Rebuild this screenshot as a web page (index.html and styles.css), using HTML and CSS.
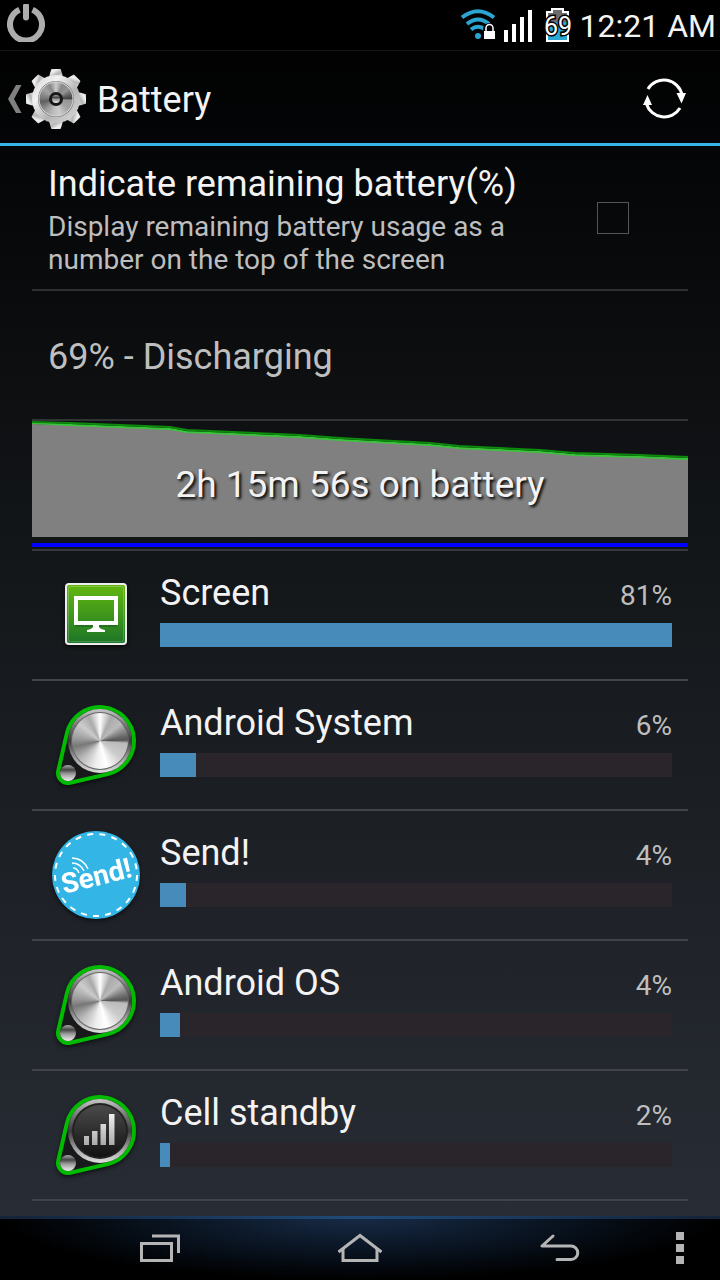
FILE: index.html
```html
<!DOCTYPE html>
<html lang="en">
<head>
    <meta charset="UTF-8">
    <meta name="viewport" content="width=device-width, initial-scale=1">
    <title>Battery</title>
    <link rel="stylesheet" href="styles.css">
</head>
<body>
<!-- shared gradients and shapes -->
<svg class="defs" width="0" height="0" aria-hidden="true">
    <defs>
        <linearGradient id="gear-fill" x1="0" y1="0" x2="1" y2="1">
            <stop offset="0" stop-color="#cfcfcf"/>
            <stop offset=".3" stop-color="#f2f2f2"/>
            <stop offset=".6" stop-color="#b5b5b5"/>
            <stop offset="1" stop-color="#dedede"/>
        </linearGradient>
        <linearGradient id="ring-fill" x1="0" y1="0" x2="0" y2="1">
            <stop offset="0" stop-color="#c8c8c8"/>
            <stop offset=".25" stop-color="#777"/>
            <stop offset=".5" stop-color="#3a3a3a"/>
            <stop offset=".75" stop-color="#999"/>
            <stop offset="1" stop-color="#e0e0e0"/>
        </linearGradient>
        <linearGradient id="dark-fill" x1="0" y1="0" x2="0" y2="1">
            <stop offset="0" stop-color="#4a4a4a"/>
            <stop offset="1" stop-color="#121212"/>
        </linearGradient>
        <linearGradient id="ball-fill" x1="0" y1="0" x2="0" y2="1">
            <stop offset="0" stop-color="#aaa"/>
            <stop offset=".3" stop-color="#444"/>
            <stop offset=".55" stop-color="#999"/>
            <stop offset="1" stop-color="#f0f0f0"/>
        </linearGradient>
        <linearGradient id="green-fill" x1="0" y1="0" x2="0" y2="1">
            <stop offset="0" stop-color="#63b80f"/>
            <stop offset="1" stop-color="#1d7527"/>
        </linearGradient>
        <linearGradient id="bars-fill" x1="0" y1="0" x2="0" y2="1">
            <stop offset="0" stop-color="#f0f0f0"/>
            <stop offset="1" stop-color="#aaa"/>
        </linearGradient>
        <path id="tooth" d="M25 10 L27 3 Q27 2 28 2 H36 Q37 2 37 3 L39 10 Z"/>
        <path id="belt" d="M59.65 77.15 A34 34 0 1 0 18.85 36.35 L10.25 73.75 A10 10 0 0 0 22.25 85.75 Z"/>
    </defs>
</svg>

<div class="screen">
    <!-- status bar -->
    <div class="status-bar">
        <svg class="power" width="38" height="38" viewBox="0 0 38 38" fill="none" stroke="#adadad">
            <path d="M12.5 5.8 A16 16 0 1 0 25.500 5.800" stroke-width="6"/>
            <path d="M19 2 V13.500" stroke-width="6" stroke-linecap="round"/>
        </svg>
        <div class="status-icons">
            <svg width="35" height="34" viewBox="0 0 35 34" fill="none">
                <g stroke="#2ba6d2" stroke-width="4">
                    <path d="M1 9.500 Q17 -3 33 9.500"/>
                    <path d="M6 16 Q17 7 28 16"/>
                    <path d="M10 21.500 Q17 16 24 21.500"/>
                </g>
                <circle cx="17" cy="28" r="3" fill="#2ba6d2"/>
                <path d="M22 32 V22 Q22 15 28.500 15 T35 22 V32 Z" fill="#000"/>
                <rect x="23" y="23" width="11" height="8" fill="#fff"/>
                <path d="M25 23 V20 a3.500 3.500 0 0 1 7 0 V23" stroke="#fff" stroke-width="1.500"/>
            </svg>
            <svg width="28" height="34" viewBox="0 0 28 34" fill="#fff">
                <rect x="0" y="22" width="4" height="12"/>
                <rect x="8" y="16" width="4" height="18"/>
                <rect x="16" y="9" width="4" height="25"/>
                <rect x="24" y="2" width="4" height="32"/>
            </svg>
            <svg class="charge" width="28" height="34" viewBox="0 0 28 34">
                <path d="M3 33 V4 H8 V1 H19 V4 H24 V33 Z" fill="#6c6c6c" stroke="#fff" stroke-width="2"/>
                <rect x="4" y="14" width="19" height="18" fill="#2ba6d2"/>
                <text x="14" y="27" text-anchor="middle">69</text>
            </svg>
            <span class="clock">12:21 AM</span>
        </div>
    </div>

    <!-- action bar -->
    <header class="action-bar">
        <a class="up" href="#" aria-label="Back to settings">
            <svg width="14" height="28" viewBox="0 0 14 28" fill="#808080">
                <path d="M0 14 L8 0 H13.500 L6 14 L13.500 28 H8 Z"/>
            </svg>
            <svg width="64" height="64" viewBox="0 0 64 64">
                <g fill="url(#gear-fill)">
                    <use href="#tooth"/>
                    <use href="#tooth" transform="rotate(45 32 32)"/>
                    <use href="#tooth" transform="rotate(90 32 32)"/>
                    <use href="#tooth" transform="rotate(135 32 32)"/>
                    <use href="#tooth" transform="rotate(180 32 32)"/>
                    <use href="#tooth" transform="rotate(225 32 32)"/>
                    <use href="#tooth" transform="rotate(270 32 32)"/>
                    <use href="#tooth" transform="rotate(315 32 32)"/>
                    <circle cx="32" cy="32" r="24"/>
                </g>
                <circle cx="32" cy="32" r="18" fill="#777"/>
                <foreignObject x="15" y="15" width="34" height="34"><div class="steel steel-dim"></div></foreignObject>
                <circle cx="32" cy="32" r="17" fill="none" stroke="#ddd"/>
                <circle cx="32" cy="32" r="7" fill="#171717"/>
                <circle cx="32" cy="32" r="4" fill="url(#ball-fill)"/>
            </svg>
        </a>
        <h1>Battery</h1>
        <button class="refresh" type="button" aria-label="Refresh">
            <svg width="48" height="48" viewBox="0 0 48 48" fill="none" stroke="#fff" stroke-width="3">
                <path d="M8 14 A18.500 18.500 0 0 1 42 20"/>
                <path d="M40 33 A18.500 18.500 0 0 1 6.500 29"/>
                <path d="M36.500 18 H46 L41.500 28.500 Z M3 30 H12 L7.500 20 Z" fill="#fff" stroke="none"/>
            </svg>
        </button>
    </header>

    <main class="content">
        <label class="pref" for="indicate">
            <span class="pref-text">
                <span class="title">Indicate remaining battery(%)</span>
                <span class="summary">Display remaining battery usage as a number on the top of the screen</span>
            </span>
            <input id="indicate" type="checkbox">
        </label>

        <p class="state">69% - Discharging</p>

        <!-- battery history -->
        <a class="history" href="#">
            <svg viewBox="0 0 656 128" preserveAspectRatio="none" aria-hidden="true">
                <path fill="#808080" d="M0 3 L38 4 L138 8 L155 11 L268 16 L308 19 L398 24 L427 27 L508 31 L543 34 L608 36 L656 38 V116 H0 Z"/>
                <path class="line-light" d="M0 2 L38 4 L138 8 L155 11 L268 16 L308 19 L398 24 L427 27 L508 31 L543 34 L608 36 L656 38"/>
                <path class="line-dark" d="M0 1 L38 2 L138 6 L155 9 L268 14 L308 17 L398 22 L427 25 L508 29 L543 32 L608 34 L656 36"/>
                <rect x="0" y="122" width="656" height="4" fill="#00f"/>
            </svg>
            <span class="history-text">2h 15m 56s on battery</span>
        </a>

        <!-- usage list -->
        <ul class="usage">
            <li>
                <a href="#">
                    <svg class="icon" width="96" height="96" viewBox="0 0 96 96">
                        <rect x="17" y="16" width="62" height="62" rx="4" fill="#eee"/>
                        <rect x="19" y="18" width="58" height="58" rx="2" fill="url(#green-fill)"/>
                        <rect x="20.500" y="19.500" width="55" height="55" rx="2" fill="none" stroke="#fff" stroke-opacity=".2"/>
                        <path d="M27 59 H69" stroke="#14501a" stroke-opacity=".4" stroke-width="2"/>
                        <rect x="28" y="31" width="40" height="25" fill="none" stroke="#fff" stroke-width="4"/>
                        <path d="M45 57 H51 V60 Q52 62 57 63 V65 H39 V63 Q44 62 45 60 Z" fill="#fff"/>
                    </svg>
                    <div class="usage-body">
                        <div class="usage-head"><span class="title">Screen</span><span class="percent">81%</span></div>
                        <div class="track"><div class="fill" style="width: 100%"></div></div>
                    </div>
                </a>
            </li>
            <li>
                <a href="#">
                    <svg class="icon" width="96" height="96" viewBox="0 0 96 96">
                        <use class="belt" href="#belt"/>
                        <circle cx="52" cy="44" r="32" fill="url(#ring-fill)"/>
                        <circle cx="52" cy="44" r="29" fill="#666"/>
                        <foreignObject x="24" y="16" width="56" height="56"><div class="steel"></div></foreignObject>
                        <circle cx="20" cy="76" r="8" fill="url(#ball-fill)"/>
                    </svg>
                    <div class="usage-body">
                        <div class="usage-head"><span class="title">Android System</span><span class="percent">6%</span></div>
                        <div class="track"><div class="fill" style="width: 7%"></div></div>
                    </div>
                </a>
            </li>
            <li>
                <a href="#">
                    <svg class="icon" width="96" height="96" viewBox="0 0 96 96">
                        <circle cx="48" cy="48" r="44" fill="#33b5e5"/>
                        <circle cx="48" cy="48" r="41" fill="none" stroke="#fff" stroke-width="2" stroke-dasharray="6 6.270"/>
                        <g fill="none" stroke="#fff" stroke-width="1.500">
                            <path d="M24 31 Q35 31 40 42"/>
                            <path d="M24 36 Q32 36 36 44"/>
                            <path d="M25 41 Q29 41 31 46"/>
                        </g>
                        <text class="send" x="16" y="67" transform="rotate(-14 16 67)">Send!</text>
                    </svg>
                    <div class="usage-body">
                        <div class="usage-head"><span class="title">Send!</span><span class="percent">4%</span></div>
                        <div class="track"><div class="fill" style="width: 5%"></div></div>
                    </div>
                </a>
            </li>
            <li>
                <a href="#">
                    <svg class="icon" width="96" height="96" viewBox="0 0 96 96">
                        <use class="belt" href="#belt"/>
                        <circle cx="52" cy="44" r="32" fill="url(#ring-fill)"/>
                        <circle cx="52" cy="44" r="29" fill="#666"/>
                        <foreignObject x="24" y="16" width="56" height="56"><div class="steel"></div></foreignObject>
                        <circle cx="20" cy="76" r="8" fill="url(#ball-fill)"/>
                    </svg>
                    <div class="usage-body">
                        <div class="usage-head"><span class="title">Android OS</span><span class="percent">4%</span></div>
                        <div class="track"><div class="fill" style="width: 4%"></div></div>
                    </div>
                </a>
            </li>
            <li>
                <a href="#">
                    <svg class="icon" width="96" height="96" viewBox="0 0 96 96">
                        <use class="belt" href="#belt"/>
                        <circle cx="52" cy="44" r="32" fill="url(#ring-fill)"/>
                        <circle cx="52" cy="44" r="28" fill="#222"/>
                        <circle cx="52" cy="44" r="26" fill="url(#dark-fill)"/>
                        <path fill="url(#bars-fill)" d="M36 58 V49 H41 V58 Z M44 58 V44 H49.500 V58 Z M52.500 58 V37 H58 V58 Z M61 58 V27 H66.500 V58 Z"/>
                        <circle cx="20" cy="76" r="8" fill="url(#ball-fill)"/>
                    </svg>
                    <div class="usage-body">
                        <div class="usage-head"><span class="title">Cell standby</span><span class="percent">2%</span></div>
                        <div class="track"><div class="fill" style="width: 2%"></div></div>
                    </div>
                </a>
            </li>
        </ul>
    </main>

    <!-- navigation bar -->
    <nav class="nav-bar">
        <button type="button" aria-label="Recent apps">
            <svg width="40" height="28" viewBox="0 0 40 28" fill="none" stroke="#b5b5b5" stroke-width="3">
                <rect x="1.500" y="9.500" width="30" height="17"/>
                <path d="M12 2 H38.500 V19"/>
            </svg>
        </button>
        <button type="button" aria-label="Home">
            <svg width="46" height="30" viewBox="0 0 46 30" fill="none" stroke="#b5b5b5" stroke-width="3">
                <path d="M1.500 19 L23 2.500 L44.500 19"/>
                <path d="M6 16 V27.500 H40 V16"/>
            </svg>
        </button>
        <button type="button" aria-label="Back">
            <svg width="40" height="28" viewBox="0 0 40 28" fill="none" stroke="#b5b5b5" stroke-width="3" stroke-linecap="round" stroke-linejoin="round">
                <path d="M13 2 L2 12 H31 a6.700 6.700 0 0 1 0 13.500 H17"/>
            </svg>
        </button>
        <button type="button" aria-label="Menu">
            <svg width="8" height="32" viewBox="0 0 8 32" fill="#b5b5b5">
                <rect width="8" height="8"/>
                <rect y="12" width="8" height="8"/>
                <rect y="24" width="8" height="8"/>
            </svg>
        </button>
    </nav>
</div>
</body>
</html>
```
FILE: styles.css
```css
*{
    box-sizing: border-box;
}
body{
    margin: 0;
    background: #000;
    color: #f3f3f3;
    font-family: Roboto, "Noto Sans", sans-serif;
}
svg{
    display: block;
    flex: none;
}
a{
    color: inherit;
    text-decoration: none;
}
button{
    display: flex;
    align-items: center;
    justify-content: center;
    padding: 0;
    border: 0;
    background: none;
}
.defs{
    position: absolute;
}
.screen{
    display: flex;
    flex-direction: column;
    min-height: 100vh;
    background: linear-gradient(#000, #040506 146px, #15181b 600px, #2a2e37);
}

/* status bar */
.status-bar{
    display: flex;
    justify-content: space-between;
    height: 51px;
    padding: 0 4px 0 7px;
    background: #000;
    border-bottom: 1px solid #151515;
}
.power{
    margin-top: 4px;
}
.status-icons{
    display: flex;
    align-items: center;
    gap: 8px;
}
.charge text{
    fill: #fff;
    stroke: #000;
    stroke-width: 3px;
    paint-order: stroke;
    font-size: 25px;
}
.charge{
    margin-left: 4px;
}
.clock{
    padding-top: 2px;
    font-size: 32px;
    line-height: 38px;
}

/* action bar */
.action-bar{
    display: flex;
    align-items: center;
    height: 95px;
    padding: 3px 32px 0 8px;
    border-bottom: 3px solid #33b5e5;
}
.up{
    display: flex;
    align-items: center;
    gap: 2px;
}
.action-bar h1{
    flex: 1;
    margin: 2px 0 0 9px;
    font-size: 36px;
    font-weight: 400;
    line-height: 42px;
}

/* preference and state */
.content{
    flex: 1;
    padding: 0 32px;
}
.pref{
    display: flex;
    align-items: center;
    justify-content: space-between;
    padding: 13px 59px 13px 16px;
    border-bottom: 2px solid #2e3033;
}
.pref-text{
    display: flex;
    flex-direction: column;
    gap: 5px;
    width: 500px;
    padding-top: 4px;
}
.title{
    font-size: 36px;
    line-height: 42px;
}
.summary{
    color: #bebebe;
    font-size: 28px;
    line-height: 33px;
}
.pref input{
    appearance: none;
    flex: none;
    width: 32px;
    height: 32px;
    margin: 0;
    border: 1px solid #555;
}
.pref input:checked{
    background: #33b5e5;
}
.state{
    margin: 0;
    padding: 45px 16px 41px;
    border-bottom: 2px solid #313335;
    color: #bebebe;
    font-size: 36px;
    line-height: 42px;
}

/* history chart, caption stacked over the graph */
.history{
    display: grid;
    place-items: center;
    border-bottom: 2px solid #37393c;
}
.history svg{
    grid-area: 1 / 1;
    width: 100%;
    height: 128px;
}
.line-light,
.line-dark{
    fill: none;
    stroke: #3cc33c;
    stroke-width: 2px;
}
.line-dark{
    stroke: #0b8a0b;
}
.history-text{
    grid-area: 1 / 1;
    z-index: 1;
    font-size: 37px;
    line-height: 42px;
    text-shadow: 2px 2px 3px #000;
}

/* usage list */
.usage{
    margin: 0;
    padding: 0;
    list-style: none;
}
.usage li{
    border-bottom: 2px solid #404348;
}
.usage a{
    display: flex;
    align-items: center;
    gap: 16px;
    padding: 16px;
}
.icon{
    filter: drop-shadow(0 2px 2px rgba(0, 0, 0, .6));
}
.belt{
    fill: #17191b;
    stroke: #0b0;
    stroke-width: 4px;
}
.steel{
    width: 100%;
    height: 100%;
    border-radius: 50%;
    background: conic-gradient(#fff, #aaa 25deg, #bbb 50deg, #666 80deg, #555 88deg, #bbb 95deg, #ccc 130deg, #fff 165deg, #eee 190deg, #bbb 225deg, #777 258deg, #999 275deg, #ccc 310deg, #aaa 335deg, #fff);
}
.steel-dim{
    filter: brightness(.8);
}
.send{
    fill: #fff;
    font-size: 28px;
    font-weight: 700;
}
.usage-body{
    flex: 1;
    display: flex;
    flex-direction: column;
    gap: 9px;
}
.usage-head{
    display: flex;
    align-items: baseline;
    justify-content: space-between;
}
.percent{
    color: #bebebe;
    font-size: 28px;
    line-height: 33px;
}
.track{
    height: 24px;
    margin-bottom: 12px;
    background: #29252b;
}
.fill{
    height: 100%;
    background: #468bb9;
}

/* navigation bar */
.nav-bar{
    display: grid;
    grid-template-columns: 1fr 1fr 1fr 40px;
    height: 64px;
    padding: 0 20px 0 60px;
    background:
        linear-gradient(90deg, #142338, #1f4a78 50%, #142338) top / 100% 3px no-repeat,
        radial-gradient(ellipse 50% 100% at 50% 0, #182c48, #08111d 60%, #000);
}
```
